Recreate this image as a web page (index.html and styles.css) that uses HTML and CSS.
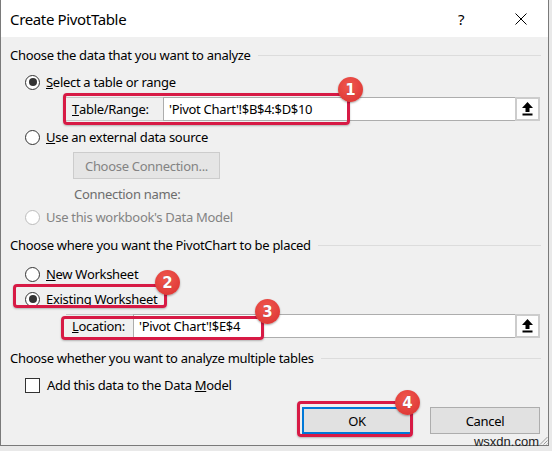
FILE: index.html
```html
<!DOCTYPE html>
<html>
<head>
<meta charset="utf-8">
<link rel="stylesheet" href="styles.css">
</head>
<body>
<div class="window">
  <div class="titlebar">
    <span class="title">Create PivotTable</span>
    <span class="help">?</span>
    <svg class="close" width="12" height="12" viewBox="0 0 12 12"><path d="M0.5 0.5 L11.5 11.5 M11.5 0.5 L0.5 11.5" stroke="#000" stroke-width="1" fill="none"/></svg>
  </div>
  <div class="body">
    <div class="group-head h1"><span>Choose the data that you want to analyze</span><span class="rule"></span></div>
    <div class="radio-row r1"><span class="radio checked"></span><span><u>S</u>elect a table or range</span></div>
    <div class="refedit e1">
      <span class="ref-label l1"><u>T</u>able/Range:</span>
      <span class="ref-input">'Pivot Chart'!$B$4:$D$10</span>
      <span class="ref-btn"><svg width="11" height="14" viewBox="0 0 11 14"><path d="M5.5 0 L11 6 L7.5 6 L7.5 10 L3.5 10 L3.5 6 L0 6 Z" fill="#000"/><rect x="0.5" y="11.5" width="10" height="2" fill="#000"/></svg></span>
    </div>
    <div class="radio-row r2"><span class="radio"></span><span><u>U</u>se an external data source</span></div>
    <div class="conn-btn">Choose Connection...</div>
    <div class="conn-name">Connection name:</div>
    <div class="radio-row r3 disabled"><span class="radio"></span><span>Use this workbook's Data Model</span></div>
    <div class="group-head h2"><span>Choose where you want the PivotChart to be placed</span><span class="rule"></span></div>
    <div class="radio-row r4"><span class="radio"></span><span><u>N</u>ew Worksheet</span></div>
    <div class="radio-row r5"><span class="radio checked"></span><span><u>E</u>xisting Worksheet</span></div>
    <div class="refedit e2">
      <span class="ref-label l2"><u>L</u>ocation:</span>
      <span class="ref-input">'Pivot Chart'!$E$4</span>
      <span class="ref-btn"><svg width="11" height="14" viewBox="0 0 11 14"><path d="M5.5 0 L11 6 L7.5 6 L7.5 10 L3.5 10 L3.5 6 L0 6 Z" fill="#000"/><rect x="0.5" y="11.5" width="10" height="2" fill="#000"/></svg></span>
    </div>
    <div class="group-head h3"><span>Choose whether you want to analyze multiple tables</span><span class="rule"></span></div>
    <div class="check-row"><span class="checkbox"></span><span>Add this data to the Data <u>M</u>odel</span></div>
    <div class="buttons">
      <div class="btn default">OK</div>
      <div class="btn">Cancel</div>
    </div>

    <div class="mark m1"></div><div class="badge b1">1</div>
    <div class="mark m2"></div><div class="badge b2">2</div>
    <div class="mark m3"></div><div class="badge b3">3</div>
    <div class="mark m4"></div><div class="badge b4">4</div>
    <div class="watermark">wsxdn.com</div>
    <svg class="grip" width="9" height="9" viewBox="0 0 9 9"><path d="M8.5 1 L1 8.5 M8.5 4.5 L4.5 8.5 M8.5 7.5 L7.5 8.5" stroke="#9a9a9a" stroke-width="1"/></svg>
  </div>
</div>
</body>
</html>
```
FILE: styles.css
```css
html, body {
  margin: 0;
  padding: 0;
}
body {
  background: #e9e9e9;
  width: 552px;
  height: 451px;
  overflow: hidden;
  font-family: "Noto Sans", "Open Sans", sans-serif;
  font-size: 13px;
  letter-spacing: -0.3px;
  color: #000;
}
.window {
  width: 547px;
  height: 445px;
  border-left: 1px solid #7a7a7a;
  border-right: 1px solid #7a7a7a;
  border-bottom: 1px solid #7a7a7a;
  background: #f0f0f0;
  display: flex;
  flex-direction: column;
}
.titlebar {
  height: 37px;
  background: #fff;
  display: flex;
  align-items: center;
  flex-shrink: 0;
}
.title {
  font-size: 15px;
  letter-spacing: -0.35px;
  margin-left: 9px;
  flex: 1;
}
.help {
  font-size: 15px;
  width: 10px;
  margin-right: 47px;
}
.close {
  margin-right: 21px;
}
.body {
  position: relative;
  flex: 1;
  padding-left: 9px;
  display: flex;
  flex-direction: column;
  align-items: flex-start;
}
.group-head {
  display: flex;
  align-items: center;
  height: 20px;
  width: 531px;
  white-space: nowrap;
}
.group-head .rule {
  flex: 1;
  height: 1px;
  background: #dcdcdc;
  margin-left: 7px;
}
.h1 { margin-top: 8px; }
.h2 { margin-top: 8px; }
.h3 { margin-top: 10px; }
.radio-row, .check-row {
  display: flex;
  align-items: center;
  height: 20px;
  margin-left: 15px;
  white-space: nowrap;
}
.radio {
  width: 13px;
  height: 13px;
  border: 1px solid #333;
  border-radius: 50%;
  background: #fff;
  margin-right: 6px;
  display: flex;
  align-items: center;
  justify-content: center;
}
.radio.checked::after {
  content: "";
  width: 8px;
  height: 8px;
  border-radius: 50%;
  background: #333;
}
.disabled { color: #838383; }
.disabled .radio { border-color: #bcbcbc; }
.r1 { margin-top: 7px; }
.r2 { margin-top: 6px; }
.r3 { margin-top: 3px; }
.r4 { margin-top: 9px; }
.r5 { margin-top: 5px; }
.refedit {
  display: flex;
  height: 24px;
  width: 474px;
  margin-left: 56px;
  margin-top: 5px;
}
.ref-label {
  display: flex;
  align-items: center;
  padding-left: 6px;
  border-top: 1px solid #c8c8c8;
  border-bottom: 1px solid #c8c8c8;
  box-sizing: border-box;
}
.l1 { width: 97px; }
.l2 { width: 67px; }
.ref-input {
  flex: 1;
  display: flex;
  align-items: center;
  background: #fff;
  border: 1px solid #adadad;
  border-right: none;
  padding-left: 5px;
  box-sizing: border-box;
}
.ref-btn {
  width: 25px;
  box-sizing: border-box;
  border: 2px solid #cccccc;
  background: #fdfdfd;
  display: flex;
  align-items: center;
  justify-content: center;
}
.conn-btn {
  margin-top: 5px;
  margin-left: 63px;
  width: 147px;
  height: 27px;
  box-sizing: border-box;
  border: 1px solid #cccccc;
  background: #e5e5e5;
  color: #838383;
  display: flex;
  align-items: center;
  justify-content: center;
}
.conn-name {
  margin-top: 5px;
  margin-left: 64px;
  height: 20px;
  display: flex;
  align-items: center;
  color: #6d6d6d;
}
.check-row { margin-top: 7px; }
.checkbox {
  width: 13px;
  height: 13px;
  border: 1px solid #333;
  background: #fff;
  margin-right: 7px;
}
.buttons {
  margin-top: 12px;
  margin-left: 292px;
  display: flex;
  gap: 18px;
}
.btn {
  width: 110px;
  height: 27px;
  box-sizing: border-box;
  border: 1px solid #adadad;
  background: #e1e1e1;
  display: flex;
  align-items: center;
  justify-content: center;
}
.btn.default {
  border: 2px solid #0078d7;
}
.mark {
  position: absolute;
  border: 3px solid #d71a45;
  border-radius: 4px;
  box-shadow: 0 1px 2px rgba(0,0,0,0.25);
}
.m1 { left: 62px; top: 56px; width: 281px; height: 26px; }
.m2 { left: 12px; top: 247px; width: 148px; height: 18px; }
.m3 { left: 60px; top: 279px; width: 197px; height: 18px; }
.m4 { left: 296px; top: 364px; width: 110px; height: 30px; }
.badge {
  position: absolute;
  width: 25px;
  height: 25px;
  border-radius: 50%;
  background: radial-gradient(circle at 45% 35%, #f1584f, #d9302f);
  color: #fff;
  font-family: "DejaVu Sans", sans-serif;
  font-weight: bold;
  font-size: 15px;
  letter-spacing: 0;
  display: flex;
  align-items: center;
  justify-content: center;
  box-shadow: 0 1px 2px rgba(0,0,0,0.35);
  text-shadow: 0 0 1px rgba(0,0,0,0.4);
}
.b1 { left: 337px; top: 40px; }
.b2 { left: 154px; top: 233px; }
.b3 { left: 254px; top: 262px; }
.b4 { left: 394px; top: 353px; }
.watermark {
  position: absolute;
  right: 9px;
  bottom: -3px;
  font-family: "Liberation Sans", sans-serif;
  font-size: 13px;
  letter-spacing: 0;
  color: #222;
  line-height: 12px;
}
.grip {
  position: absolute;
  right: 0;
  bottom: 0;
}
```
